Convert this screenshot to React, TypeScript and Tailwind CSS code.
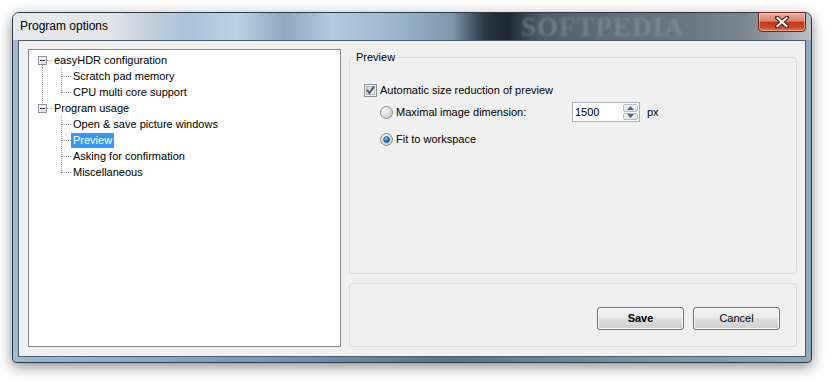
import React from 'react';

const DOT = '#a0a0a0';

const ExpandBox: React.FC = () => (
    <>
        <rect x="9.5" y="4.5" width="8" height="8" fill="url(#boxfill)" stroke="#919191" />
        <line x1="11" y1="8.5" x2="16" y2="8.5" stroke="#1f3a5c" />
    </>
);

type Row = {
    label: string;
    level: 0 | 1;
    up?: boolean;
    down?: boolean;
    parentLine?: boolean;
    lastChild?: boolean;
    selected?: boolean;
};

const rows: Row[] = [
    { label: 'easyHDR configuration', level: 0, down: true },
    { label: 'Scratch pad memory', level: 1, parentLine: true },
    { label: 'CPU multi core support', level: 1, parentLine: true, lastChild: true },
    { label: 'Program usage', level: 0, up: true },
    { label: 'Open & save picture windows', level: 1 },
    { label: 'Preview', level: 1, selected: true },
    { label: 'Asking for confirmation', level: 1 },
    { label: 'Miscellaneous', level: 1, lastChild: true },
];

const TreeRow: React.FC<{ row: Row }> = ({ row }) => {
    const w = row.level === 0 ? 23 : 42;
    return (
        <div className="flex h-[16px] items-center">
            <svg width={w} height={16} className="shrink-0">
                <defs>
                    <linearGradient id="boxfill" x1="0" y1="0" x2="1" y2="1">
                        <stop offset="0" stopColor="#ffffff" />
                        <stop offset="1" stopColor="#d6d6d6" />
                    </linearGradient>
                </defs>
                {row.level === 0 ? (
                    <>
                        {row.up && <line x1="13.5" y1="0" x2="13.5" y2="4" stroke={DOT} strokeDasharray="1 1" />}
                        {row.down && <line x1="13.5" y1="13" x2="13.5" y2="16" stroke={DOT} strokeDasharray="1 1" />}
                        <line x1="18" y1="8.5" x2="23" y2="8.5" stroke={DOT} strokeDasharray="1 1" />
                        <ExpandBox />
                    </>
                ) : (
                    <>
                        {row.parentLine && <line x1="13.5" y1="0" x2="13.5" y2="16" stroke={DOT} strokeDasharray="1 1" />}
                        <line x1="32.5" y1="0" x2="32.5" y2={row.lastChild ? 9 : 16} stroke={DOT} strokeDasharray="1 1" />
                        <line x1="33" y1="8.5" x2="42" y2="8.5" stroke={DOT} strokeDasharray="1 1" />
                    </>
                )}
            </svg>
            <span className={`px-[2px] leading-[15px] whitespace-nowrap ${row.selected ? 'bg-[#3399ff] text-white' : 'text-black'}`}>
                {row.label}
            </span>
        </div>
    );
};

const Checkbox: React.FC = () => (
    <svg width="13" height="13" className="shrink-0">
        <defs>
            <linearGradient id="cbin" x1="0" y1="0" x2="1" y2="1">
                <stop offset="0" stopColor="#d0d4d9" />
                <stop offset="1" stopColor="#f7f7f7" />
            </linearGradient>
        </defs>
        <rect x="0.5" y="0.5" width="12" height="12" fill="#f4f4f4" stroke="#8e8f8f" />
        <rect x="2.5" y="2.5" width="8" height="8" fill="url(#cbin)" stroke="#b0b4ba" />
        <path d="M3.5 6.5 L5.5 9 L9.5 3.2" fill="none" stroke="#3b4f7a" strokeWidth="1.8" strokeLinecap="square" />
    </svg>
);

const Radio: React.FC<{ checked?: boolean }> = ({ checked }) => (
    <svg width="13" height="13" className="shrink-0">
        <defs>
            <radialGradient id="rin" cx="0.35" cy="0.35" r="0.7">
                <stop offset="0" stopColor="#f8f8f8" />
                <stop offset="1" stopColor="#c9cdd2" />
            </radialGradient>
            <radialGradient id="rdot" cx="0.4" cy="0.35" r="0.7">
                <stop offset="0" stopColor="#8ad0f5" />
                <stop offset="0.6" stopColor="#1e78b8" />
                <stop offset="1" stopColor="#0b3f6a" />
            </radialGradient>
        </defs>
        <circle cx="6.5" cy="6.5" r="6" fill="url(#rin)" stroke="#8e8f8f" />
        {checked && <circle cx="6.5" cy="6.5" r="3" fill="url(#rdot)" stroke="#1b4f7c" strokeWidth="0.6" />}
    </svg>
);

const Spin: React.FC = () => (
    <div className="flex h-[20px] w-[68px] items-stretch border border-[#abadb3] bg-white">
        <span className="flex-1 pl-[2px] leading-[18px] text-black">1500</span>
        <div className="my-[1px] mr-[1px] flex w-[15px] flex-col gap-[1px]">
            <div className="flex flex-1 items-center justify-center rounded-[2px] border border-[#b6bcc6] bg-[linear-gradient(#f4f6f8,#dde3ea)]">
                <svg width="7" height="4"><path d="M0 4 L3.5 0 L7 4 Z" fill="#4e6a8c" /></svg>
            </div>
            <div className="flex flex-1 items-center justify-center rounded-[2px] border border-[#b6bcc6] bg-[linear-gradient(#f4f6f8,#dde3ea)]">
                <svg width="7" height="4"><path d="M0 0 L3.5 4 L7 0 Z" fill="#4e6a8c" /></svg>
            </div>
        </div>
    </div>
);

const WinButton: React.FC<{ label: string; bold?: boolean }> = ({ label, bold }) => (
    <button className={`h-[23px] w-[87px] rounded-[3px] border border-[#707070] bg-[linear-gradient(#f2f2f2_0%,#ebebeb_50%,#dddddd_50%,#cfcfcf_100%)] text-black shadow-[inset_0_0_0_1px_#fcfcfc] ${bold ? 'font-bold' : ''}`}>
        {label}
    </button>
);

export default function App() {
    return (
        <div className="h-[384px] w-[832px] overflow-hidden bg-white pl-[12px] pt-[12px] font-['Liberation_Sans',Arial,sans-serif] text-[11px]">
            <div className="flex h-[351px] w-[800px] flex-col rounded-t-[7px] rounded-b-[4px] border border-[#2b3a46] bg-[linear-gradient(90deg,#9fbad3_0%,#7f9bb4_30%,#5c7286_55%,#7b95ab_80%,#90a9bf_100%)] shadow-[0_4px_14px_rgba(0,0,0,0.45)]">
                {/* title bar */}
                <div className="relative flex h-[27px] items-start rounded-t-[6px] bg-[linear-gradient(90deg,#e6e9ec_0%,#e2e6ea_12%,#c3d0db_17%,#a9c3da_22%,#bcd2e6_28%,#8ea8bf_34%,#b3cbe0_40%,#9bb5cc_48%,#7f97ad_55%,#2a3945_59%,#1d2831_62%,#4c5c69_66%,#5f6e7a_75%,#6a7884_85%,#7c8790_92%,#b9c1c8_100%)]">
                    <span className="absolute left-[508px] top-[1px] font-['Liberation_Serif',serif] text-[27px] font-bold leading-[26px] tracking-[1px] text-[#8a99a6] opacity-50 blur-[0.8px]">
                        SOFTPEDIA
                    </span>
                    <span className="relative pl-[7px] pt-[6px] text-[12px] leading-[14px] text-black">Program options</span>
                    <div className="flex-1" />
                    <div className="relative mr-[5px] mt-[-1px] flex h-[20px] w-[48px] items-center justify-center rounded-b-[4px] border border-[#6a2518] bg-[linear-gradient(#eab1a5_0%,#d9806d_45%,#c2381a_52%,#cf4a28_80%,#e07a54_100%)] shadow-[inset_0_0_0_1px_rgba(255,220,210,0.5)]">
                        <svg width="14" height="12" viewBox="0 0 14 12">
                            <path d="M2 1.5 L12 10.5 M12 1.5 L2 10.5" stroke="#4a1a12" strokeWidth="4" strokeLinecap="square" />
                            <path d="M2.5 2 L11.5 10 M11.5 2 L2.5 10" stroke="#ffffff" strokeWidth="2.2" strokeLinecap="square" />
                        </svg>
                    </div>
                </div>

                {/* client */}
                <div className="mx-[5px] flex h-[317px] border border-[#4f5d69] bg-[#f0f0f0] pb-[9px] pl-[9px] pr-[7px] pt-[8px]">
                    <div className="h-[298px] w-[313px] shrink-0 border border-[#828790] bg-white pt-[2px]">
                        {rows.map((r) => (
                            <TreeRow key={r.label} row={r} />
                        ))}
                    </div>

                    <div className="ml-[8px] flex w-[448px] flex-col">
                        <fieldset className="h-[225px] rounded-[3px] border border-[#d5dfe5]">
                            <legend className="ml-[4px] px-[2px] leading-[16px] text-black">Preview</legend>
                            <div className="pl-[14px]">
                                <div className="mt-[17px] flex h-[16px] items-center gap-[3px]">
                                    <Checkbox />
                                    <span className="text-black">Automatic size reduction of preview</span>
                                </div>
                                <div className="ml-[16px] mt-[4px] flex h-[20px] items-center">
                                    <div className="flex w-[192px] items-center gap-[3px]">
                                        <Radio />
                                        <span className="text-black">Maximal image dimension:</span>
                                    </div>
                                    <Spin />
                                    <span className="ml-[7px] text-black">px</span>
                                </div>
                                <div className="ml-[16px] mt-[9px] flex h-[16px] items-center gap-[3px]">
                                    <Radio checked />
                                    <span className="text-black">Fit to workspace</span>
                                </div>
                            </div>
                        </fieldset>

                        <div className="mt-[9px] flex h-[64px] items-end justify-end gap-[9px] rounded-[3px] border border-[#d5dfe5] pb-[16px] pr-[16px]">
                            <WinButton label="Save" bold />
                            <WinButton label="Cancel" />
                        </div>
                    </div>
                </div>
            </div>
        </div>
    );
}
